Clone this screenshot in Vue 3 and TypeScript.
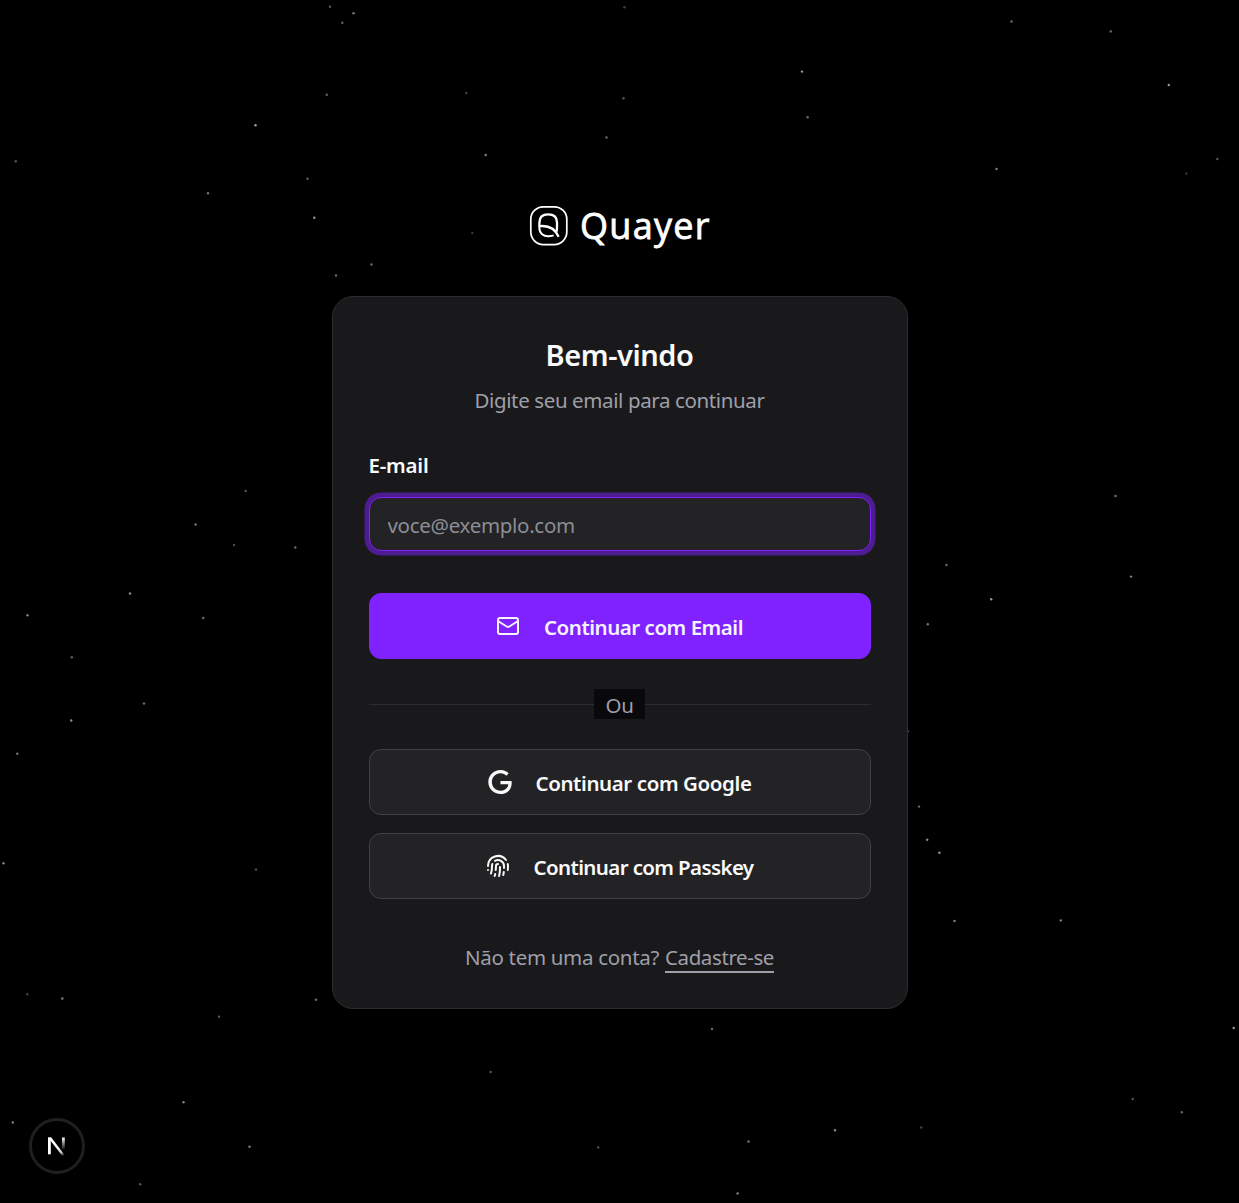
<script setup lang="ts">
import { ref, type Directive } from 'vue'

type Star = [x: number, y: number, brightness: number]

const stars: Star[] = [
  [330, 6.7, 0.4], [353.5, 13.2, 0.55], [342.3, 22.7, 0.45], [326.8, 94.8, 0.45], [255.5, 125.2, 0.75],
  [15.8, 161.2, 0.4], [307.5, 178.8, 0.45], [208, 193.2, 0.55], [314.3, 217.8, 0.7], [371.5, 264.5, 0.5],
  [336, 275.5, 0.5], [624.5, 7.3, 0.3], [466.3, 93, 0.3], [623.5, 98.3, 0.4], [606.5, 137.5, 0.5],
  [485.7, 155, 0.6], [472.3, 233, 0.25], [1011.5, 21.5, 0.5], [1110.8, 31.4, 0.5], [802, 71.6, 0.7],
  [1168.8, 85, 0.7], [807.6, 117.2, 0.5], [996.5, 169, 0.6], [1217.3, 159, 0.4], [1186.3, 173.5, 0.25],
  [1115.5, 496, 0.55], [946.5, 565, 0.5], [1131, 576.6, 0.6], [991.2, 599.3, 0.7], [927.8, 624.2, 0.55],
  [245.7, 491, 0.4], [195.6, 524.5, 0.55], [234, 545, 0.35], [295.3, 547.5, 0.5], [130, 593.5, 0.65],
  [27.5, 615.3, 0.6], [203.2, 618, 0.5], [71.8, 657.2, 0.45], [144, 703.5, 0.5], [71.2, 720.5, 0.65],
  [17.3, 753.7, 0.55], [3.5, 863.3, 0.6], [256, 869.6, 0.4], [27.3, 994.2, 0.3], [62.3, 998.5, 0.6],
  [316, 999.8, 0.5], [219, 1016.8, 0.4], [183.5, 1102.2, 0.6], [12.8, 1122.5, 0.6], [249.5, 1146.7, 0.6],
  [140.2, 1184.3, 0.4], [490.7, 1072, 0.4], [598.2, 1147.4, 0.4], [712, 1029, 0.5], [748.5, 1141.5, 0.55],
  [737.6, 1193.4, 0.6], [835, 1130.3, 0.65], [921.2, 1127.5, 0.3], [1132.7, 1099, 0.4], [1181.8, 1112.2, 0.45],
  [1233.7, 1028, 0.7], [908, 731.2, 0.3], [919, 806.6, 0.5], [927.2, 839.8, 0.65], [939.4, 852.8, 0.7],
  [954.5, 921, 0.6], [1060.8, 920.4, 0.6],
]

const email = ref('')

/* Tracks a label so that its advance width equals the given number of pixels. */
const vTrack: Directive<HTMLElement, number> = {
  mounted(el, { value }) {
    const range = document.createRange()
    range.selectNodeContents(el)
    const width = range.getBoundingClientRect().width
    const count = (el.textContent ?? '').length
    el.style.letterSpacing = `${(value - width) / count}px`
  },
}
</script>

<template>
  <main class="page">
    <svg class="sky" viewBox="0 0 1239 1203" aria-hidden="true">
      <circle v-for="([x, y, a], i) in stars" :key="i" :cx="x" :cy="y" r="1.2" fill="#fff" :fill-opacity="a * 0.85" />
    </svg>

    <svg class="brand" width="184" height="48" viewBox="0 0 184 48" role="img" aria-label="Quayer">
      <rect x="2.8" y="4.8" width="36" height="37.8" rx="12.5" fill="none" stroke="#fff" stroke-width="1.7" />
      <g fill="none" stroke="#fff" stroke-width="2.3">
        <path d="M11.400 24.500V20.400C11.400 15.200 14.800 12.400 20.200 12.400s8.800 2.800 8.800 8V26c0 1.800-.4 3.200-1.100 4.500" />
        <path d="M11.200 24.200c8.400-1 15.600 1.600 19.400 10.600" />
        <path d="M11.400 23.800v2.200c0 5.300 4 8.400 9.200 8.200 2-.1 3.600-.2 5-.8" stroke-width="2" />
      </g>
      <text class="wordmark" x="52" y="36.800" textLength="129.500" lengthAdjust="spacing">Quayer</text>
    </svg>

    <section class="card">
      <h1><span v-track="148">Bem-vindo</span></h1>
      <p class="subtitle"><span v-track="290">Digite seu email para continuar</span></p>

      <label for="email"><span v-track="60">E-mail</span></label>
      <div class="field">
        <input id="email" v-model="email" type="email" placeholder="voce@exemplo.com" />
      </div>

      <button class="btn primary" type="button">
        <svg class="icon" viewBox="0 0 24 24">
          <path d="m22 7-8.991 5.727a2 2 0 0 1-2.009 0L2 7" />
          <rect x="2" y="4" width="20" height="16" rx="2" />
        </svg>
        <span v-track="199">Continuar com Email</span>
      </button>

      <div class="divider"><span class="or"><span v-track="28">Ou</span></span></div>

      <button class="btn outline" type="button">
        <svg class="icon solid" viewBox="0 0 24 24">
          <path d="M12.480 10.920v3.280h7.840c-.24 1.840-.853 3.187-1.787 4.133-1.147 1.147-2.933 2.400-6.053 2.400-4.827 0-8.600-3.893-8.600-8.720s3.773-8.720 8.600-8.720c2.600 0 4.507 1.027 5.907 2.347l2.307-2.307C18.747 1.440 16.133 0 12.480 0 5.867 0 .307 5.387.307 12s5.560 12 12.173 12c3.573 0 6.267-1.173 8.373-3.360 2.160-2.160 2.840-5.213 2.840-7.667 0-.76-.053-1.467-.173-2.053H12.480z" />
        </svg>
        <span v-track="216">Continuar com Google</span>
      </button>

      <button class="btn outline" type="button">
        <svg class="icon" viewBox="0 0 24 24">
          <path d="M12 10a2 2 0 0 0-2 2c0 1.020-.1 2.510-.26 4" />
          <path d="M14 13.120c0 2.380 0 6.380-1 8.880" />
          <path d="M17.290 21.020c.12-.6.430-2.300.5-3.020" />
          <path d="M2 12a10 10 0 0 1 18-6" />
          <path d="M2 16h.01" />
          <path d="M21.800 16c.2-2 .131-5.354 0-6" />
          <path d="M5 19.500C5.500 18 6 15 6 12a6 6 0 0 1 .34-2" />
          <path d="M8.650 22c.21-.66.450-1.320.57-2" />
          <path d="M9 6.800a6 6 0 0 1 9 5.200v2" />
        </svg>
        <span v-track="220">Continuar com Passkey</span>
      </button>

      <p class="signup"><span v-track="194">Não tem uma conta?</span><a href="#"><span v-track="109">Cadastre-se</span></a></p>
    </section>

    <div class="dev-badge">
      <svg width="26" height="26" viewBox="0 0 26 26">
        <defs>
          <linearGradient id="diag" x1="14" y1="14" x2="20" y2="22.500" gradientUnits="userSpaceOnUse">
            <stop stop-color="#fff" />
            <stop offset="0.600" stop-color="#fff" stop-opacity="0.800" />
            <stop offset="1" stop-color="#fff" stop-opacity="0" />
          </linearGradient>
          <linearGradient id="stem" x1="0" y1="4.500" x2="0" y2="17" gradientUnits="userSpaceOnUse">
            <stop stop-color="#fff" />
            <stop offset="1" stop-color="#fff" stop-opacity="0" />
          </linearGradient>
        </defs>
        <path d="M4 4.500h2.800v16.800H4z" fill="#fff" />
        <path d="M4 4.500h3.300L21.600 23.300l-1.800 1.400z" fill="url(#diag)" />
        <path d="M18 4.500h2.800v12.500H18z" fill="url(#stem)" />
      </svg>
    </div>
  </main>
</template>

<style>
body {
  margin: 0;
  background: #000;
}
</style>

<style scoped>
.page {
  position: relative;
  display: flex;
  flex-direction: column;
  align-items: center;
  box-sizing: border-box;
  height: 1203px;
  padding-top: 202px;
  overflow: hidden;
  background: #000;
  color: #fafafa;
  font: 400 20.5px/30px 'Noto Sans', 'Open Sans', sans-serif;
  font-stretch: 90%;
}

.sky {
  position: absolute;
  inset: 0;
  width: 1239px;
  height: 1203px;
}

.brand {
  position: relative;
  flex: none;
  margin-left: 1px;
}

.wordmark {
  fill: #fff;
  stroke: #fff;
  stroke-width: 0.8px;
  font-family: 'Open Sans', sans-serif;
  font-size: 36px;
  font-weight: 500;
  font-stretch: 100%;
}

.card {
  position: relative;
  display: flex;
  flex-direction: column;
  box-sizing: border-box;
  flex: none;
  width: 576px;
  height: 713px;
  margin-top: 46px;
  padding: 40px 36px 0;
  border: 1px solid #2d2d2f;
  border-radius: 21px;
  background: #19191b;
}

span {
  white-space: nowrap;
}

h1 {
  margin: 0;
  font-size: 29px;
  font-weight: 600;
  line-height: 36px;
  text-align: center;
}

.subtitle {
  margin: 12px 0 0;
  color: #9f9fa9;
  text-align: center;
}

label {
  height: 30px;
  margin-top: 35px;
  font-weight: 600;
}

.field {
  display: flex;
  box-sizing: border-box;
  height: 54px;
  margin-top: 17px;
  border: 1px solid #7f22fe;
  border-radius: 12px;
  background: #232325;
  box-shadow: 0 0 0 4.5px #4d1c91;
}

input {
  flex: 1;
  min-width: 0;
  padding: 2px 18px 0;
  border: 0;
  outline: 0;
  background: none;
  color: #fafafa;
  font: inherit;
  font-stretch: inherit;
  letter-spacing: -0.3px;
}

input::placeholder {
  color: #8d8d97;
  opacity: 1;
}

.btn {
  display: flex;
  align-items: center;
  justify-content: center;
  gap: 24px;
  box-sizing: border-box;
  flex: none;
  height: 66px;
  padding: 0;
  border: 1px solid #414143;
  border-radius: 12px;
  background: #232325;
  color: #fafafa;
  font: inherit;
  font-weight: 600;
}

.btn span {
  padding-top: 2px;
}

.btn.primary {
  margin-top: 42px;
  border-color: #7f22fe;
  background: #7f22fe;
  color: #f5f3ff;
}

.icon {
  flex: none;
  width: 24px;
  height: 24px;
  fill: none;
  stroke: currentColor;
  stroke-width: 2;
  stroke-linecap: round;
  stroke-linejoin: round;
}

.icon.solid {
  fill: currentColor;
  stroke: none;
}

.divider {
  display: flex;
  align-items: center;
  height: 30px;
  margin: 30px 0;
  color: #9f9fa9;
}

.divider::before,
.divider::after {
  content: '';
  flex: 1;
  height: 1px;
  background: #2d2d2f;
}

.or {
  box-sizing: border-box;
  width: 51px;
  height: 30px;
  padding-top: 1px;
  background: #09090b;
  text-align: center;
}

.btn.outline + .btn.outline {
  margin-top: 18px;
}

.signup {
  display: flex;
  justify-content: center;
  gap: 6px;
  margin: 43px 0 0;
  color: #9f9fa9;
}

.signup a {
  height: 29px;
  border-bottom: 2px solid #9f9fa9;
  color: inherit;
  text-decoration: none;
}

.dev-badge {
  position: absolute;
  bottom: 29px;
  left: 29px;
  display: flex;
  align-items: center;
  justify-content: center;
  box-sizing: border-box;
  width: 56px;
  height: 56px;
  border: 3px solid #1f1f1f;
  border-radius: 50%;
  background: #000;
}
</style>
